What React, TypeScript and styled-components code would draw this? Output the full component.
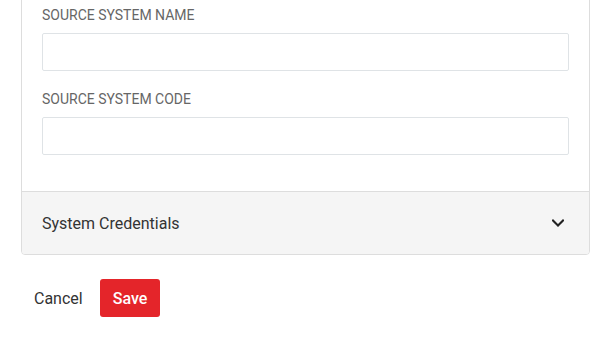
import styled, { createGlobalStyle } from "styled-components";

const GlobalStyle = createGlobalStyle`
  body {
    margin: 0;
    background: #ffffff;
    font-family: Roboto, "Liberation Sans", sans-serif;
    color: #333333;
  }
`;

const Page = styled.div`
  padding: 0 16px 0 21px;
`;

const Card = styled.div`
  margin-top: -20px;
  border: 1px solid #dddddd;
  border-radius: 4px;
  background: #ffffff;
  overflow: hidden;
`;

const CardBody = styled.div`
  display: flex;
  flex-direction: column;
  gap: 19px;
  padding: 25px 20px 36px;
`;

const Field = styled.div`
  display: flex;
  flex-direction: column;
  gap: 9px;
`;

const Label = styled.label`
  font-size: 14px;
  line-height: 18px;
  color: #666666;
  text-transform: uppercase;
`;

const Input = styled.input`
  box-sizing: border-box;
  height: 38px;
  width: 100%;
  border: 1px solid #dfe3e6;
  border-radius: 2px;
  padding: 0 10px;
  font: inherit;
  outline: none;
`;

const AccordionHeader = styled.div`
  display: flex;
  align-items: center;
  justify-content: space-between;
  height: 62px;
  padding: 0 25px 0 20px;
  border-top: 1px solid #dddddd;
  background: #f5f5f5;
  font-size: 16px;
  color: #333333;
  cursor: pointer;
`;

const Footer = styled.div`
  display: flex;
  gap: 4px;
  margin-top: 24px;
`;

const Button = styled.button<{ primary?: boolean }>`
  height: 38px;
  padding: 0 13px;
  border: none;
  border-radius: 3px;
  font-family: Roboto, "Liberation Sans", sans-serif;
  font-size: 16px;
  font-weight: ${({ primary }) => (primary ? 500 : 400)};
  background: ${({ primary }) => (primary ? "#e4252a" : "transparent")};
  color: ${({ primary }) => (primary ? "#ffffff" : "#333333")};
  cursor: pointer;
`;

const Chevron = () => (
  <svg width="12" height="8" viewBox="0 0 12 8" fill="none">
    <polyline
      points="1,1.5 6,6.5 11,1.5"
      stroke="#222222"
      strokeWidth="2"
      strokeLinecap="square"
    />
  </svg>
);

export default function App() {
  return (
    <Page>
      <GlobalStyle />
      <Card>
        <CardBody>
          <Field>
            <Label>Source System Name</Label>
            <Input />
          </Field>
          <Field>
            <Label>Source System Code</Label>
            <Input />
          </Field>
        </CardBody>
        <AccordionHeader>
          System Credentials
          <Chevron />
        </AccordionHeader>
      </Card>
      <Footer>
        <Button>Cancel</Button>
        <Button primary>Save</Button>
      </Footer>
    </Page>
  );
}
